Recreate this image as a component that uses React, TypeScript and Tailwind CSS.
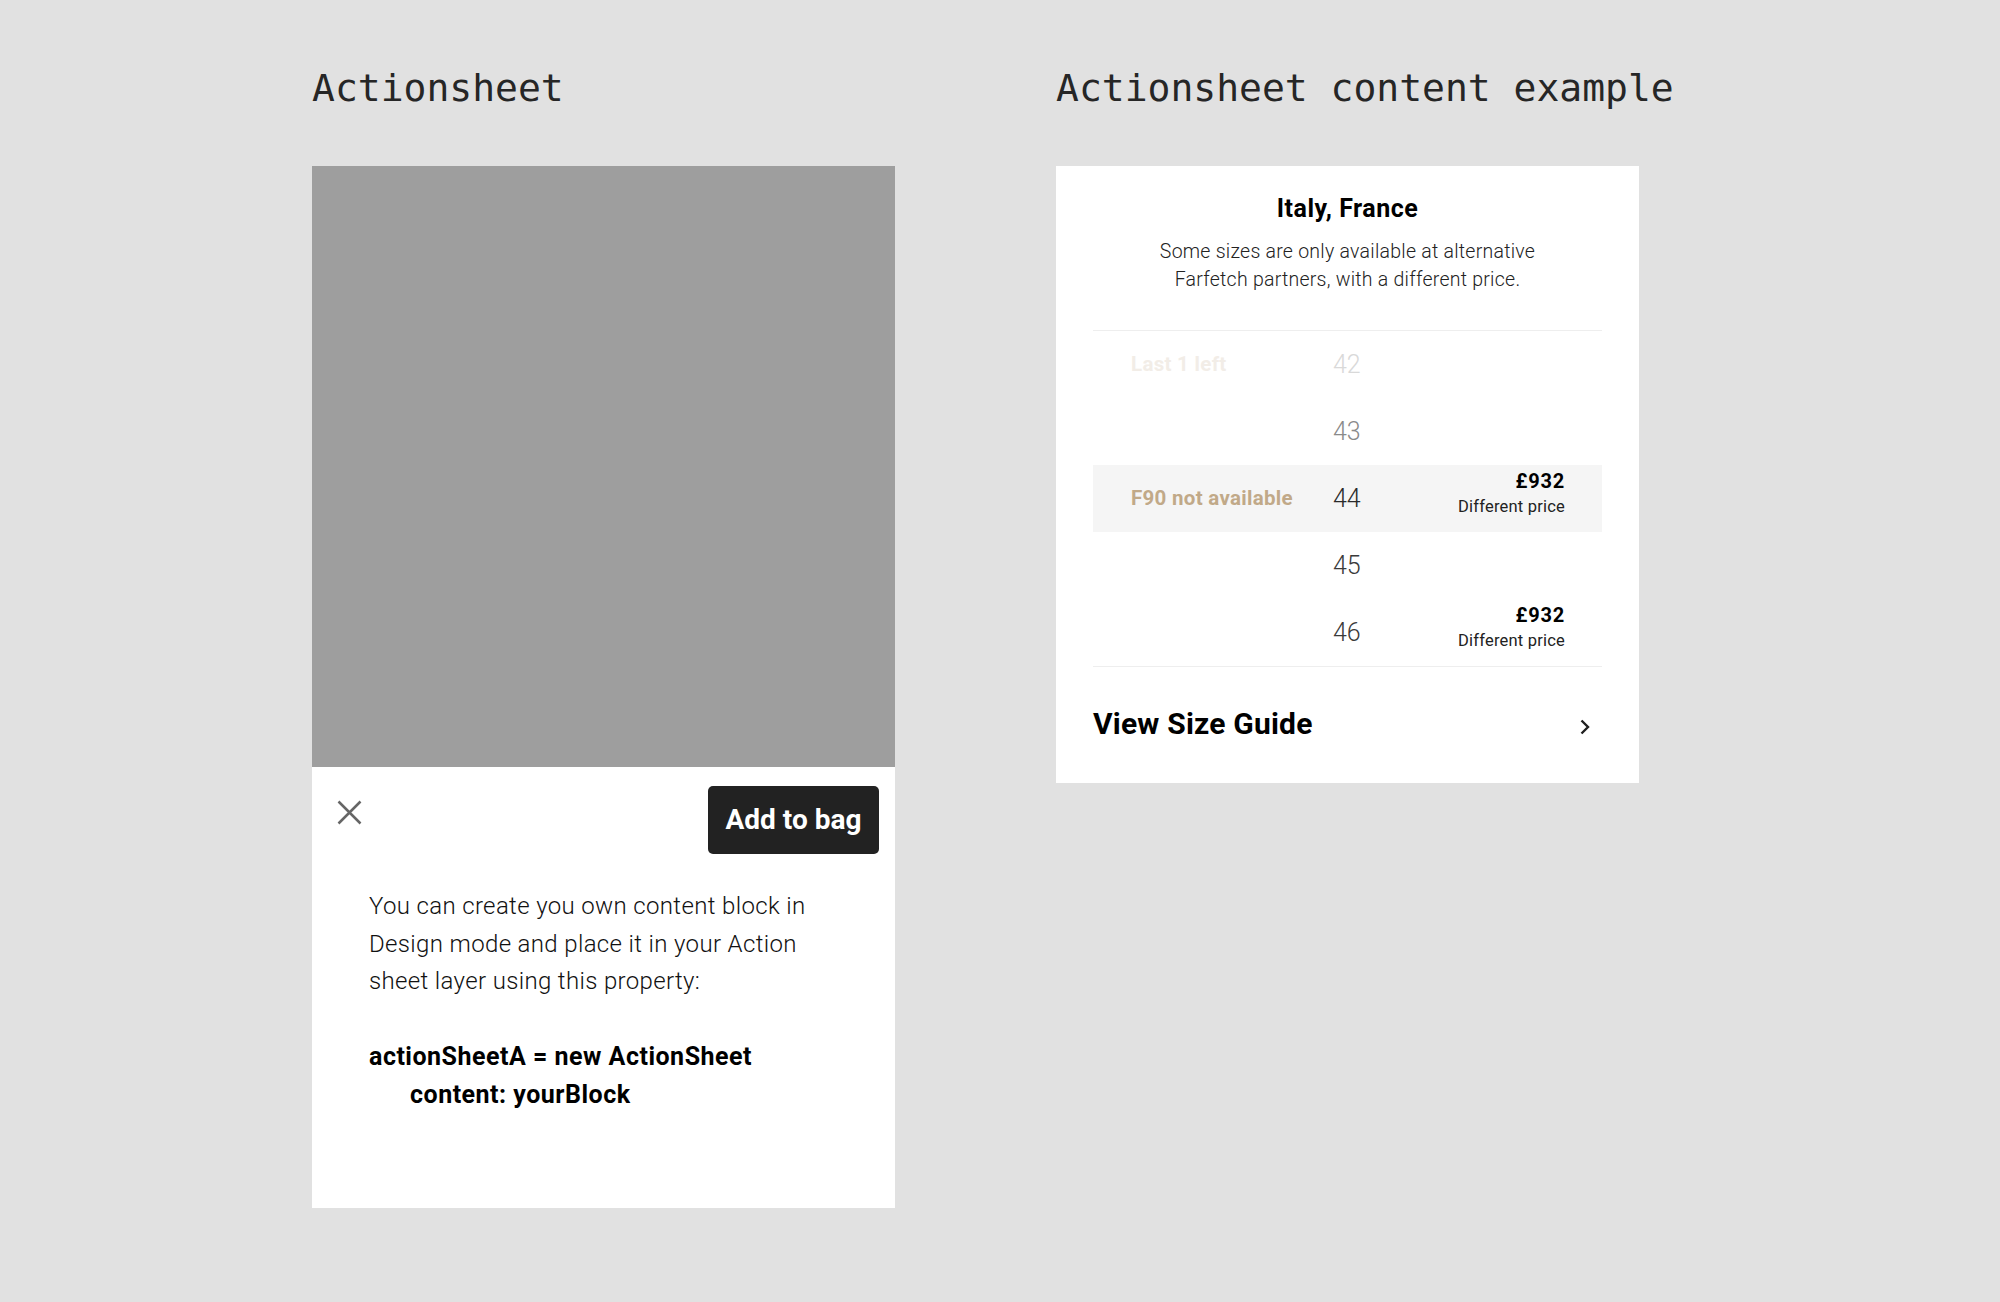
import React from "react";

const SANS = "font-['Roboto','Noto_Sans',sans-serif]";
const MONO = "font-['DejaVu_Sans_Mono','Liberation_Mono',monospace]";

interface SizeRow {
  size: string;
  label?: string;
  labelColor?: string;
  sizeColor: string;
  price?: boolean;
  highlight?: boolean;
}

const ROWS: SizeRow[] = [
  { size: "42", label: "Last 1 left", labelColor: "text-[#f2ede7]", sizeColor: "text-[#d9d9d9]" },
  { size: "43", sizeColor: "text-[#8a8a8a]" },
  { size: "44", label: "F90 not available", labelColor: "text-[#c1a988]", sizeColor: "text-[#2a2a2a]", price: true, highlight: true },
  { size: "45", sizeColor: "text-[#3a3a3a]" },
  { size: "46", sizeColor: "text-[#3a3a3a]", price: true },
];

const CloseIcon = () => (
  <svg width="25" height="25" viewBox="0 0 25 25" fill="none">
    <path d="M1.5 1.5 L23.5 23.5 M23.5 1.5 L1.5 23.5" stroke="#666" strokeWidth="2.5" />
  </svg>
);

const Chevron = () => (
  <svg width="12" height="16" viewBox="0 0 12 16" fill="none">
    <path d="M2.5 1.5 L9 8 L2.5 14.5" stroke="#1f1f1f" strokeWidth="2.4" />
  </svg>
);

const Title: React.FC<{ children: React.ReactNode }> = ({ children }) => (
  <h2 className={`${MONO} text-[38px] leading-[38px] h-[38px] text-[#262626] whitespace-nowrap`}>{children}</h2>
);

const ActionSheetDemo = () => (
  <div className="w-[583px] mt-[59px] flex flex-col">
    <div className="h-[601px] bg-[#9e9e9e]" />
    <div className={`${SANS} h-[441px] bg-white flex flex-col`}>
      <div className="flex justify-between items-start pl-[25px] pr-[16px] pt-[19px]">
        <div className="mt-[14px]">
          <CloseIcon />
        </div>
        <button className="h-[68px] w-[171px] rounded-[5px] bg-[#222222] text-white text-[28px] font-bold leading-none">
          Add to bag
        </button>
      </div>
      <div className="pl-[57px] pt-[34px] leading-[37.5px] text-[#111]">
        <p className="text-[24px] font-light tracking-[0.35px] whitespace-nowrap">
          You can create you own content block in
          <br />
          Design mode and place it in your Action
          <br />
          sheet layer using this property:
        </p>
        <p className="text-[25px] font-bold tracking-[0.5px] text-black mt-[37.5px] whitespace-nowrap">actionSheetA = new ActionSheet</p>
        <p className="text-[25px] font-bold tracking-[0.5px] text-black pl-[41px] whitespace-nowrap">content: yourBlock</p>
      </div>
    </div>
  </div>
);

const SizeSheet = () => (
  <div className={`${SANS} w-[583px] h-[617px] mt-[59px] bg-white px-[37px] flex flex-col`}>
    <h3 className="pt-[28px] text-center text-[25px] tracking-[0.5px] leading-[30px] font-bold text-black">Italy, France</h3>
    <p className="mt-[14px] text-center text-[19.5px] tracking-[0.25px] leading-[28px] font-light text-[#222]">
      Some sizes are only available at alternative
      <br />
      Farfetch partners, with a different price.
    </p>
    <div className="mt-[36px] border-t border-[#eeeeee]">
      {ROWS.map((r) => (
        <div key={r.size} className={`h-[67px] flex items-center ${r.highlight ? "bg-[#f5f5f5]" : ""}`}>
          <div className={`w-[240px] pl-[38px] text-[20.5px] tracking-[0.3px] font-bold ${r.labelColor ?? ""}`}>{r.label}</div>
          <div className={`w-[120px] text-[25px] font-light ${r.sizeColor}`}>{r.size}</div>
          <div className="flex-1 self-start pt-[4px] pr-[37px] text-right leading-[25px]">
            {r.price && (
              <>
                <div className="text-[20px] tracking-[0.8px] font-bold text-black">£932</div>
                <div className="text-[16.5px] tracking-[0.2px] text-[#222]">Different price</div>
              </>
            )}
          </div>
        </div>
      ))}
    </div>
    <div className="border-t border-[#eeeeee] h-[117px] flex items-center justify-between pb-[4px] pr-[11px]">
      <span className="text-[30px] tracking-[0.2px] font-bold text-black">View Size Guide</span>
      <div className="mt-[8px]">
        <Chevron />
      </div>
    </div>
  </div>
);

export default function App() {
  return (
    <div className="min-h-screen bg-[#e1e1e1] pl-[312px] pt-[69px] flex gap-[161px]">
      <div className="flex flex-col">
        <Title>Actionsheet</Title>
        <ActionSheetDemo />
      </div>
      <div className="flex flex-col">
        <Title>Actionsheet content example</Title>
        <SizeSheet />
      </div>
    </div>
  );
}
